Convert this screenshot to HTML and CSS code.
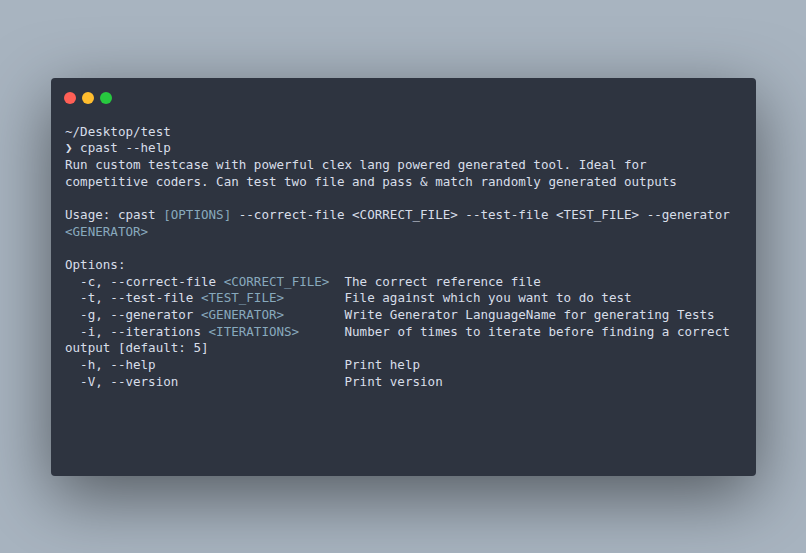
FILE: index.html
```html
<!DOCTYPE html>
<html>
<head>
<meta charset="utf-8">
<link rel="stylesheet" href="styles.css">
</head>
<body>
<div class="window">
  <div class="titlebar">
    <span class="dot red"></span>
    <span class="dot yellow"></span>
    <span class="dot green"></span>
  </div>
<pre class="term">~/Desktop/test
❯ cpast --help
Run custom testcase with powerful clex lang powered generated tool. Ideal for
competitive coders. Can test two file and pass &amp; match randomly generated outputs

Usage: cpast <span class="hl">[OPTIONS]</span> --correct-file &lt;CORRECT_FILE&gt; --test-file &lt;TEST_FILE&gt; --generator
<span class="hl">&lt;GENERATOR&gt;</span>

Options:
  -c, --correct-file <span class="hl">&lt;CORRECT_FILE&gt;</span>  The correct reference file
  -t, --test-file <span class="hl">&lt;TEST_FILE&gt;</span>        File against which you want to do test
  -g, --generator <span class="hl">&lt;GENERATOR&gt;</span>        Write Generator LanguageName for generating Tests
  -i, --iterations <span class="hl">&lt;ITERATIONS&gt;</span>      Number of times to iterate before finding a correct
output [default: 5]
  -h, --help                         Print help
  -V, --version                      Print version</pre>
</div>
</body>
</html>
```
FILE: styles.css
```css
html, body {
  margin: 0;
  padding: 0;
  height: 100%;
}
body {
  background: #a8b4c0;
  display: flex;
  align-items: center;
  justify-content: center;
}
.window {
  width: 705px;
  height: 398px;
  box-sizing: border-box;
  background: #2e3440;
  border-radius: 4px;
  box-shadow: 0 20px 68px rgba(0, 0, 0, 0.5);
  padding: 14px 15px 0 13px;
}
.titlebar {
  display: flex;
  gap: 6px;
  height: 12px;
}
.dot {
  width: 12px;
  height: 12px;
  border-radius: 50%;
  display: block;
}
.red { background: #ff5f56; }
.yellow { background: #ffbd2e; }
.green { background: #27c93f; }
.term {
  margin: 20px 0 0 1.5px;
  font-family: "DejaVu Sans Mono", monospace;
  font-size: 12.55px;
  line-height: 16.67px;
  color: #d8dee9;
  white-space: pre;
}
.hl {
  color: #88a9bd;
}
```
